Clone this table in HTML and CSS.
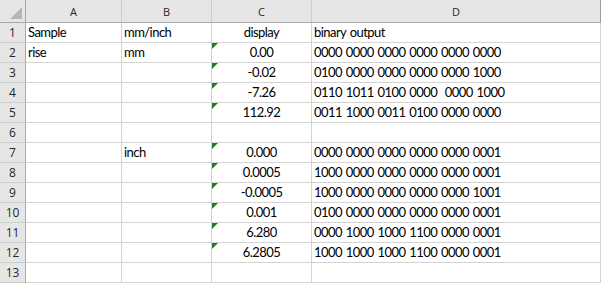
FILE: index.html
```html
<!DOCTYPE html>
<html>
<head>
<meta charset="utf-8">
<link rel="stylesheet" href="styles.css">
</head>
<body>
<div class="sheet">
  <div class="corner"><span class="corner-tri"></span></div>
  <div class="colhead">A</div>
  <div class="colhead">B</div>
  <div class="colhead">C</div>
  <div class="colhead">D</div>

  <div class="rowhead">1</div>
  <div class="cell">Sample</div>
  <div class="cell">mm/inch</div>
  <div class="cell center">display</div>
  <div class="cell">binary output</div>

  <div class="rowhead">2</div>
  <div class="cell">rise</div>
  <div class="cell">mm</div>
  <div class="cell center flag">0.00</div>
  <div class="cell">0000 0000 0000 0000 0000 0000</div>

  <div class="rowhead">3</div>
  <div class="cell"></div>
  <div class="cell"></div>
  <div class="cell center flag">-0.02</div>
  <div class="cell">0100 0000 0000 0000 0000 1000</div>

  <div class="rowhead">4</div>
  <div class="cell"></div>
  <div class="cell"></div>
  <div class="cell center flag">-7.26</div>
  <div class="cell">0110 1011 0100 0000  0000 1000</div>

  <div class="rowhead">5</div>
  <div class="cell"></div>
  <div class="cell"></div>
  <div class="cell center flag">112.92</div>
  <div class="cell">0011 1000 0011 0100 0000 0000</div>

  <div class="rowhead">6</div>
  <div class="cell"></div>
  <div class="cell"></div>
  <div class="cell"></div>
  <div class="cell"></div>

  <div class="rowhead">7</div>
  <div class="cell"></div>
  <div class="cell">inch</div>
  <div class="cell center flag">0.000</div>
  <div class="cell">0000 0000 0000 0000 0000 0001</div>

  <div class="rowhead">8</div>
  <div class="cell"></div>
  <div class="cell"></div>
  <div class="cell center flag">0.0005</div>
  <div class="cell">1000 0000 0000 0000 0000 0001</div>

  <div class="rowhead">9</div>
  <div class="cell"></div>
  <div class="cell"></div>
  <div class="cell center flag">-0.0005</div>
  <div class="cell">1000 0000 0000 0000 0000 1001</div>

  <div class="rowhead">10</div>
  <div class="cell"></div>
  <div class="cell"></div>
  <div class="cell center flag">0.001</div>
  <div class="cell">0100 0000 0000 0000 0000 0001</div>

  <div class="rowhead">11</div>
  <div class="cell"></div>
  <div class="cell"></div>
  <div class="cell center flag">6.280</div>
  <div class="cell">0000 1000 1000 1100 0000 0001</div>

  <div class="rowhead">12</div>
  <div class="cell"></div>
  <div class="cell"></div>
  <div class="cell center flag">6.2805</div>
  <div class="cell">1000 1000 1000 1100 0000 0001</div>

  <div class="rowhead">13</div>
  <div class="cell"></div>
  <div class="cell"></div>
  <div class="cell"></div>
  <div class="cell"></div>
</div>
</body>
</html>
```

FILE: styles.css
```css
html, body {
  margin: 0;
  padding: 0;
  background: #ffffff;
}

.sheet {
  display: grid;
  grid-template-columns: 26px 96px 90px 100px 289px;
  grid-template-rows: 23px repeat(13, 20px);
  width: 601px;
}

.corner,
.colhead,
.rowhead {
  background: #e6e6e6;
  box-sizing: border-box;
  font-family: "Open Sans", "Noto Sans", sans-serif;
  font-size: 11px;
  color: #262626;
  display: flex;
  justify-content: center;
}

.corner {
  position: relative;
  border-right: 1px solid #a8a8a8;
  border-bottom: 1px solid #a8a8a8;
}

.corner-tri {
  position: absolute;
  right: 3px;
  bottom: 3px;
  width: 0;
  height: 0;
  border-left: 12px solid transparent;
  border-bottom: 12px solid #b6b6b6;
}

.colhead {
  align-items: center;
  padding-top: 1px;
  border-right: 1px solid #cdcdcd;
  border-bottom: 1px solid #a8a8a8;
}

.colhead:nth-child(5) {
  border-right-color: #9e9e9e;
}

.rowhead {
  align-items: flex-end;
  padding-bottom: 2px;
  border-right: 1px solid #a8a8a8;
  border-bottom: 1px solid #cdcdcd;
  font-size: 12px;
  line-height: 14px;
}

.cell {
  position: relative;
  box-sizing: border-box;
  border-right: 1px solid #d4d4d4;
  border-bottom: 1px solid #d4d4d4;
  font-family: Lato, "Liberation Sans", sans-serif;
  font-size: 13px;
  letter-spacing: -0.55px;
  word-spacing: 1px;
  color: #000000;
  white-space: pre;
  overflow: visible;
  padding-left: 2px;
  display: flex;
  align-items: flex-end;
  padding-bottom: 2px;
  line-height: 16px;
}

.center {
  justify-content: center;
  padding-left: 0;
}

.flag::before {
  content: "";
  position: absolute;
  left: 0;
  top: 0;
  width: 0;
  height: 0;
  border-top: 6px solid #1e7d1e;
  border-right: 6px solid transparent;
}
```
